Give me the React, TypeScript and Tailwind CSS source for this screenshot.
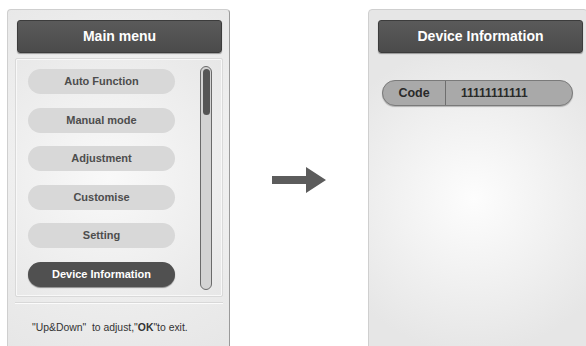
const menuItems = ['Auto Function', 'Manual mode', 'Adjustment', 'Customise', 'Setting', 'Device Information'];

const font = { fontFamily: '"Liberation Sans", Arial, sans-serif' };

function Header({ title }: { title: string }) {
  return (
    <div className="ml-[9px] mt-[10px] flex h-[33px] w-[205px] items-center justify-center rounded-[3px] border border-[#3c3c3c] bg-gradient-to-b from-[#5a5a5a] to-[#4b4b4b] shadow-[0_1px_1px_rgba(0,0,0,0.35)]">
      <span className="text-[14px] font-bold text-white">{title}</span>
    </div>
  );
}

export default function App() {
  return (
    <div className="flex h-[346px] w-[586px] overflow-hidden bg-white pl-[7px] pt-[9px]" style={font}>
      {/* Main menu screen */}
      <div className="flex h-[345px] w-[223px] shrink-0 flex-col rounded-t-[4px] border border-[#cfcfcf] border-r-[#9a9a9a] bg-[radial-gradient(circle_at_50%_45%,#f7f7f7,#e6e6e6)]">
        <Header title="Main menu" />

        <div className="ml-[7px] mt-[5px] flex h-[239px] w-[208px] rounded-[2px] border border-[#d9d9d9] bg-[radial-gradient(circle_at_45%_50%,#f9f9f9,#e7e7e7)] pl-[12px] pt-[7px] shadow-[inset_0_0_0_1px_#f8f8f8]">
          <div className="mt-[3px] flex flex-col gap-[13.5px]">
            {menuItems.map((item, i) => (
              <div
                key={i}
                className={
                  i === menuItems.length - 1
                    ? 'flex h-[25px] w-[147px] items-center justify-center rounded-full bg-[#505050] shadow-[0_1px_1px_rgba(0,0,0,0.4)]'
                    : 'flex h-[25px] w-[147px] items-center justify-center rounded-full bg-[#d8d8d8]'
                }
              >
                <span
                  className={
                    i === menuItems.length - 1
                      ? 'text-[11px] font-bold text-white'
                      : 'text-[11px] font-bold text-[#4d4d4d]'
                  }
                >
                  {item}
                </span>
              </div>
            ))}
          </div>

          {/* scroll bar */}
          <div className="ml-[25px] h-[224px] w-[12px] rounded-full border-[1.5px] border-[#6a6a6a] bg-[#d3d3d3] p-[1.5px]">
            <div className="h-[46px] w-full rounded-full bg-[#555]" />
          </div>
        </div>

        <div className="ml-[7px] mt-[5px] h-[2px] w-[208px] border-t border-[#d8d8d8] bg-[#fbfbfb]" />

        <p className="ml-[24px] mt-[16px] whitespace-pre text-[10.4px] text-[#333]">
          "Up&amp;Down"  to adjust,"<b>OK</b>"to exit.
        </p>
      </div>

      {/* arrow */}
      <div className="flex w-[138px] shrink-0 items-start justify-center pt-[158px]">
        <svg width="54" height="26" viewBox="0 0 54 26">
          <path d="M0 9 H34 V0 L54 13 L34 26 V17 H0 Z" fill="#5c5c5c" />
        </svg>
      </div>

      {/* Device information screen */}
      <div className="flex h-[345px] w-[220px] shrink-0 flex-col rounded-t-[4px] border border-[#cfcfcf] bg-[radial-gradient(circle_at_48%_55%,#fdfdfd,#e6e6e6_70%)]">
        <Header title="Device Information" />

        <div className="ml-[13px] mt-[27px] flex h-[26px] w-[191px] items-center rounded-full border border-[#7a7a7a] bg-[#a9a9a9] shadow-[0_1px_1px_rgba(0,0,0,0.25)]">
          <div className="flex h-full w-[63px] items-center justify-center border-r border-[#6e6e6e]">
            <span className="text-[12.5px] font-bold text-[#2a2a2a]">Code</span>
          </div>
          <span className="ml-[15px] text-[12px] font-bold text-[#2a2a2a]">11111111111</span>
        </div>
      </div>
    </div>
  );
}
